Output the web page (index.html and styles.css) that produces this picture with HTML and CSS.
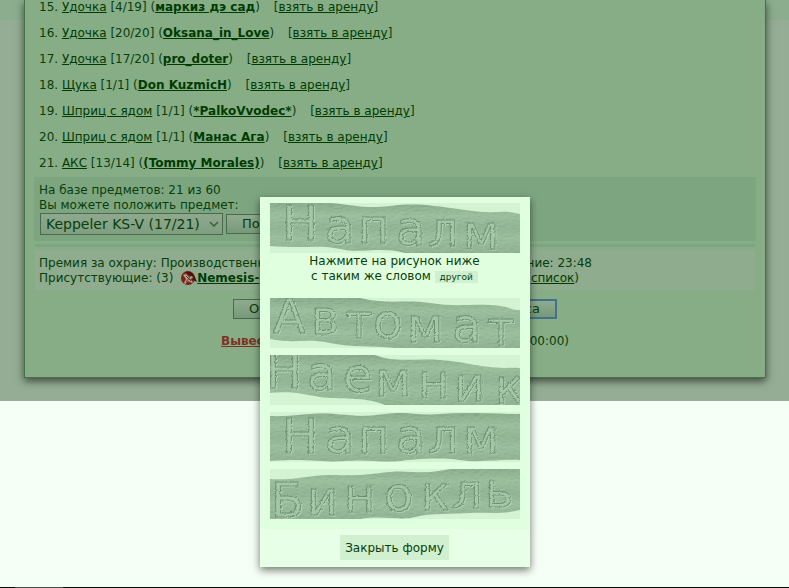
FILE: index.html
```html
<!DOCTYPE html>
<html lang="ru">
<head>
    <meta charset="UTF-8">
    <meta name="viewport" content="width=device-width, initial-scale=1.0">
    <title>База предметов</title>
    <link rel="stylesheet" href="styles.css">
</head>
<body>
    <main class="page">
        <div class="panel">
            <ol class="items" start="15">
                <li>15. <a href="#">Удочка</a> [4/19] (<a href="#"><b>маркиз дэ сад</b></a>) <span class="rent">[<a href="#">взять в аренду</a>]</span></li>
                <li>16. <a href="#">Удочка</a> [20/20] (<a href="#"><b>Oksana_in_Love</b></a>) <span class="rent">[<a href="#">взять в аренду</a>]</span></li>
                <li>17. <a href="#">Удочка</a> [17/20] (<a href="#"><b>pro_doter</b></a>) <span class="rent">[<a href="#">взять в аренду</a>]</span></li>
                <li>18. <a href="#">Щука</a> [1/1] (<a href="#"><b>Don KuzmicH</b></a>) <span class="rent">[<a href="#">взять в аренду</a>]</span></li>
                <li>19. <a href="#">Шприц с ядом</a> [1/1] (<a href="#"><b>*PalkoVvodec*</b></a>) <span class="rent">[<a href="#">взять в аренду</a>]</span></li>
                <li>20. <a href="#">Шприц с ядом</a> [1/1] (<a href="#"><b>Манас Ага</b></a>) <span class="rent">[<a href="#">взять в аренду</a>]</span></li>
                <li>21. <a href="#">АКС</a> [13/14] (<a href="#"><b>(Tommy Morales)</b></a>) <span class="rent">[<a href="#">взять в аренду</a>]</span></li>
            </ol>

            <form class="store">
                <div>На базе предметов: 21 из 60</div>
                <label for="item">Вы можете положить предмет:</label>
                <div class="store-row">
                    <span class="select-wrap">
                        <select id="item">
                            <option>Keppeler KS-V (17/21)</option>
                        </select>
                        <svg class="chevron" viewBox="0 0 10 6" width="10" height="6"><path d="M1 1l4 4 4-4" fill="none" stroke="#3f5c3f" stroke-width="1.5"/></svg>
                    </span>
                    <button type="button" class="btn">Положить</button>
                </div>
            </form>

            <div class="divider"></div>

            <div class="guard">
                <div class="guard-line"><span>Премия за охрану: Производственн</span><span>ние: 23:48</span></div>
                <div class="guard-line short">
                    <span>Присутствующие: (3)
                        <svg class="clan" viewBox="0 0 16 14" width="16" height="14"><circle cx="7" cy="7" r="7" fill="#7c2318"/><path d="M4 1Q12-2 16 11L12 9Q9 3 4 1z" fill="#4a120c"/><path d="M2 4l3-1 3 3 3-1 1 2-3 1 3 3-1 1-4-2-3 3-1-1 2-4z" fill="#a9a898"/><path d="M5 5l5 5M9 6l-4 5" stroke="#7c2318" stroke-width="1"/></svg><a href="#"><b>Nemesis-</b></a></span>
                    <span>(<a href="#">список</a>)</span>
                </div>
            </div>

            <div class="actions">
                <button type="button" class="btn">Обновить</button>
                <button type="button" class="btn active">Касса</button>
            </div>

            <div class="withdraw"><a href="#"><b>Вывести</b></a><span>(00:00)</span></div>
        </div>
    </main>
    <footer class="taskbar"><span></span></footer>

    <div class="overlay">
        <div class="dialog" role="dialog">
            <svg width="0" height="0" class="defs">
                <defs>
                    <filter id="leather" x="0" y="0" width="100%" height="100%">
                        <feTurbulence type="fractalNoise" baseFrequency="0.2 0.5" numOctaves="3" seed="4" result="n"/>
                        <feDiffuseLighting in="n" surfaceScale="1" diffuseConstant="1.1" lighting-color="#a6c8a6" result="l"><feDistantLight azimuth="250" elevation="65"/></feDiffuseLighting>
                        <feComposite in="l" in2="SourceAlpha" operator="in" result="t"/>
                        <feComposite in="t" in2="SourceGraphic" operator="arithmetic" k2="0.4" k3="0.6"/>
                    </filter>
                    <!-- rough groove with a lit lower edge -->
                    <filter id="groove" x="-5%" y="-20%" width="110%" height="140%" color-interpolation-filters="sRGB">
                        <feTurbulence type="fractalNoise" baseFrequency="0.35" numOctaves="2" seed="8" result="n"/>
                        <feDisplacementMap in="SourceGraphic" in2="n" scale="3" xChannelSelector="R" yChannelSelector="G" result="d"/>
                        <feDropShadow in="d" dx="1" dy="1" stdDeviation="0.3" flood-color="#b9dabb" flood-opacity="0.9"/>
                    </filter>
                    <linearGradient id="hide" x1="0" y1="0" x2="0" y2="1">
                        <stop offset="0" stop-color="#749878"/>
                        <stop offset="0.25" stop-color="#95ba97"/>
                        <stop offset="0.5" stop-color="#82a786"/>
                        <stop offset="0.7" stop-color="#94b997"/>
                        <stop offset="1" stop-color="#7fa583"/>
                    </linearGradient>
                </defs>
            </svg>

            <div class="captcha">
                <svg class="word" viewBox="0 0 250 50">
                    <path class="hide" d="M0 0H60C85 2 95 6 120 3S160 2 195 7 230 6 250 11V50H135C110 43 90 51 70 46S35 46 0 43z"/>
                    <text x="12 55 88 126 158 193" y="37 40 40 42 43 46">Напалм</text>
                </svg>
                <p>Нажмите на рисунок ниже<br>с таким же словом <button type="button" class="other">другой</button></p>

                <button type="button" class="choice">
                    <svg class="word" viewBox="0 0 250 50">
                        <path class="hide" d="M0 0H90C120 7 135 1 160 5S200 6 220 7 240 12 250 12V50H125C100 47 85 50 60 45S25 46 0 41z"/>
                        <text x="3 41 75 103 137 182 217" y="35 36 40 40 44 44 47">Автомат</text>
                    </svg>
                </button>
                <button type="button" class="choice">
                    <svg class="word" viewBox="0 0 250 50">
                        <path class="hide" d="M0 0H105C125 8 145 3 170 5S200 10 220 12 240 12 250 13V50H115C95 41 70 45 50 42S25 36 0 38z"/>
                        <text x="-4 37 73 105 148 184 225" y="33 35 37 41 43 46 48">Наемник</text>
                    </svg>
                </button>
                <button type="button" class="choice">
                    <svg class="word" viewBox="0 0 250 50">
                        <path class="hide" d="M0 4C25 5 40 0 65 2S90 5 115 2 145 4 170 2 220 2 250 2V48C230 47 210 51 190 48S145 47 130 49 95 47 75 49 40 46 0 49z"/>
                        <text x="12 55 88 126 158 193" y="41">Напалм</text>
                    </svg>
                </button>
                <button type="button" class="choice">
                    <svg class="word" viewBox="0 0 250 50">
                        <path class="hide" d="M0 10C25 12 40 5 65 6S100 5 120 3 150 6 175 1 220 0 250 0V41C230 46 215 43 200 44S160 44 145 48 115 46 90 50H0z"/>
                        <text x="1 37 74 114 151 182 215" y="48 46 43 42 41 39 38">Бинокль</text>
                    </svg>
                </button>
            </div>
            <div class="dialog-footer">
                <button type="button" class="close">Закрыть форму</button>
            </div>
        </div>
    </div>
</body>
</html>
```

FILE: styles.css
```css
* {
    box-sizing: border-box;
}
body {
    margin: 0;
    min-height: 100vh;
    display: flex;
    flex-direction: column;
    overflow: hidden;
    background: #f5fff5;
    color: #083e0b;
    font-family: "DejaVu Sans", Verdana, sans-serif;
    font-size: 12px;
    line-height: 15px;
}
a {
    color: #003c00;
}
button, select {
    font-family: inherit;
    color: inherit;
    margin: 0;
}
.page {
    background: linear-gradient(#8cae8e 20px, #94ad94 20px);
    padding: 0 23px 23px 24px;
}
.panel {
    display: flow-root;
    background: #87ad87;
    border: 1px solid #44704a;
    border-top: none;
    box-shadow: 0 3px 8px rgba(0, 0, 0, 0.6);
    padding: 0 9px 28px;
}
.items {
    list-style: none;
    margin: -6px 0 1px;
    padding: 0 5px;
}
.items li {
    line-height: 26px;
    white-space: nowrap;
}
.rent {
    margin-left: 10px;
}
.store {
    background: #7da680;
    padding: 6px 5px;
    height: 64px;
}
.store label {
    display: block;
}
.store-row {
    display: flex;
    align-items: center;
    gap: 3px;
    padding: 0 1px;
}
.select-wrap {
    display: grid;
    align-items: center;
}
.select-wrap > * {
    grid-area: 1 / 1;
}
.chevron {
    justify-self: end;
    margin-right: 4px;
    pointer-events: none;
}
select {
    appearance: none;
    width: 183px;
    height: 22px;
    padding: 0 5px;
    border: 1px solid #4b6a4d;
    border-radius: 0;
    background: linear-gradient(#8fa98f, #7f9f80);
    font-size: 14px;
}
.btn {
    height: 20px;
    padding: 0 15px;
    border: 1px solid #4b6a4d;
    background: linear-gradient(#8fab8f, #789a79);
    font-size: 13px;
    line-height: 16px;
}
.btn.active {
    border: 2px solid #43708a;
}
.divider {
    height: 3px;
    margin: 3px 1px;
    background: #7da680;
}
.guard {
    margin: 0 1px;
    padding: 6px 4px 4px;
    background: #8fac8f;
}
.guard-line {
    display: flex;
    justify-content: space-between;
    width: 553px;
    height: 15px;
    white-space: nowrap;
}
.guard-line.short {
    width: 540px;
}
.clan {
    margin-left: 4px;
    vertical-align: -3px;
}
.actions {
    display: flex;
    justify-content: space-between;
    width: 324px;
    margin: 9px auto 15px;
}
.withdraw {
    display: flex;
    justify-content: space-between;
    width: 348px;
    margin: 0 auto;
}
.withdraw a {
    color: #7d3324;
}
.taskbar {
    height: 1px;
    margin-top: auto;
    padding-left: 15px;
    background: #080c08;
}
.taskbar span {
    display: block;
    width: 48px;
    height: 1px;
    background: #4b504b;
}

/* captcha dialog */
.overlay {
    position: absolute;
    top: 197px;
    left: 0;
    right: 0;
    display: flex;
    justify-content: center;
}
.dialog {
    width: 270px;
    background: #dfffdf;
    box-shadow: 0 3px 8px rgba(0, 0, 0, 0.55);
}
.defs {
    display: block;
}
.captcha {
    padding: 6px 10px 10px;
    display: flex;
    flex-direction: column;
    gap: 7px;
}
.captcha p {
    margin: -6px 0 7px;
    text-align: center;
    line-height: 15px;
}
.word {
    display: block;
    width: 100%;
    height: 50px;
    background: #d3f3d3;
}
.hide {
    fill: url(#hide);
    filter: url(#leather);
}
.word text {
    font-family: "DejaVu Sans", sans-serif;
    font-size: 48px;
    fill: #a0c4a2;
    fill-opacity: 0.5;
    stroke: #587e60;
    stroke-width: 1px;
    stroke-opacity: 0.7;
    filter: url(#groove);
}
.choice {
    display: block;
    width: 100%;
    padding: 0;
    border: none;
    background: none;
    cursor: pointer;
}
.other {
    height: 12px;
    padding: 0 5px;
    border: none;
    background: #d0f0d0;
    font-size: 9px;
    line-height: 12px;
}
.dialog-footer {
    display: flex;
    justify-content: center;
    padding: 6px 0 7px;
    background: #e6ffe6;
}
.close {
    height: 25px;
    padding: 0 5px;
    border: none;
    background: #d0f0d0;
    font-size: 12px;
}
```
